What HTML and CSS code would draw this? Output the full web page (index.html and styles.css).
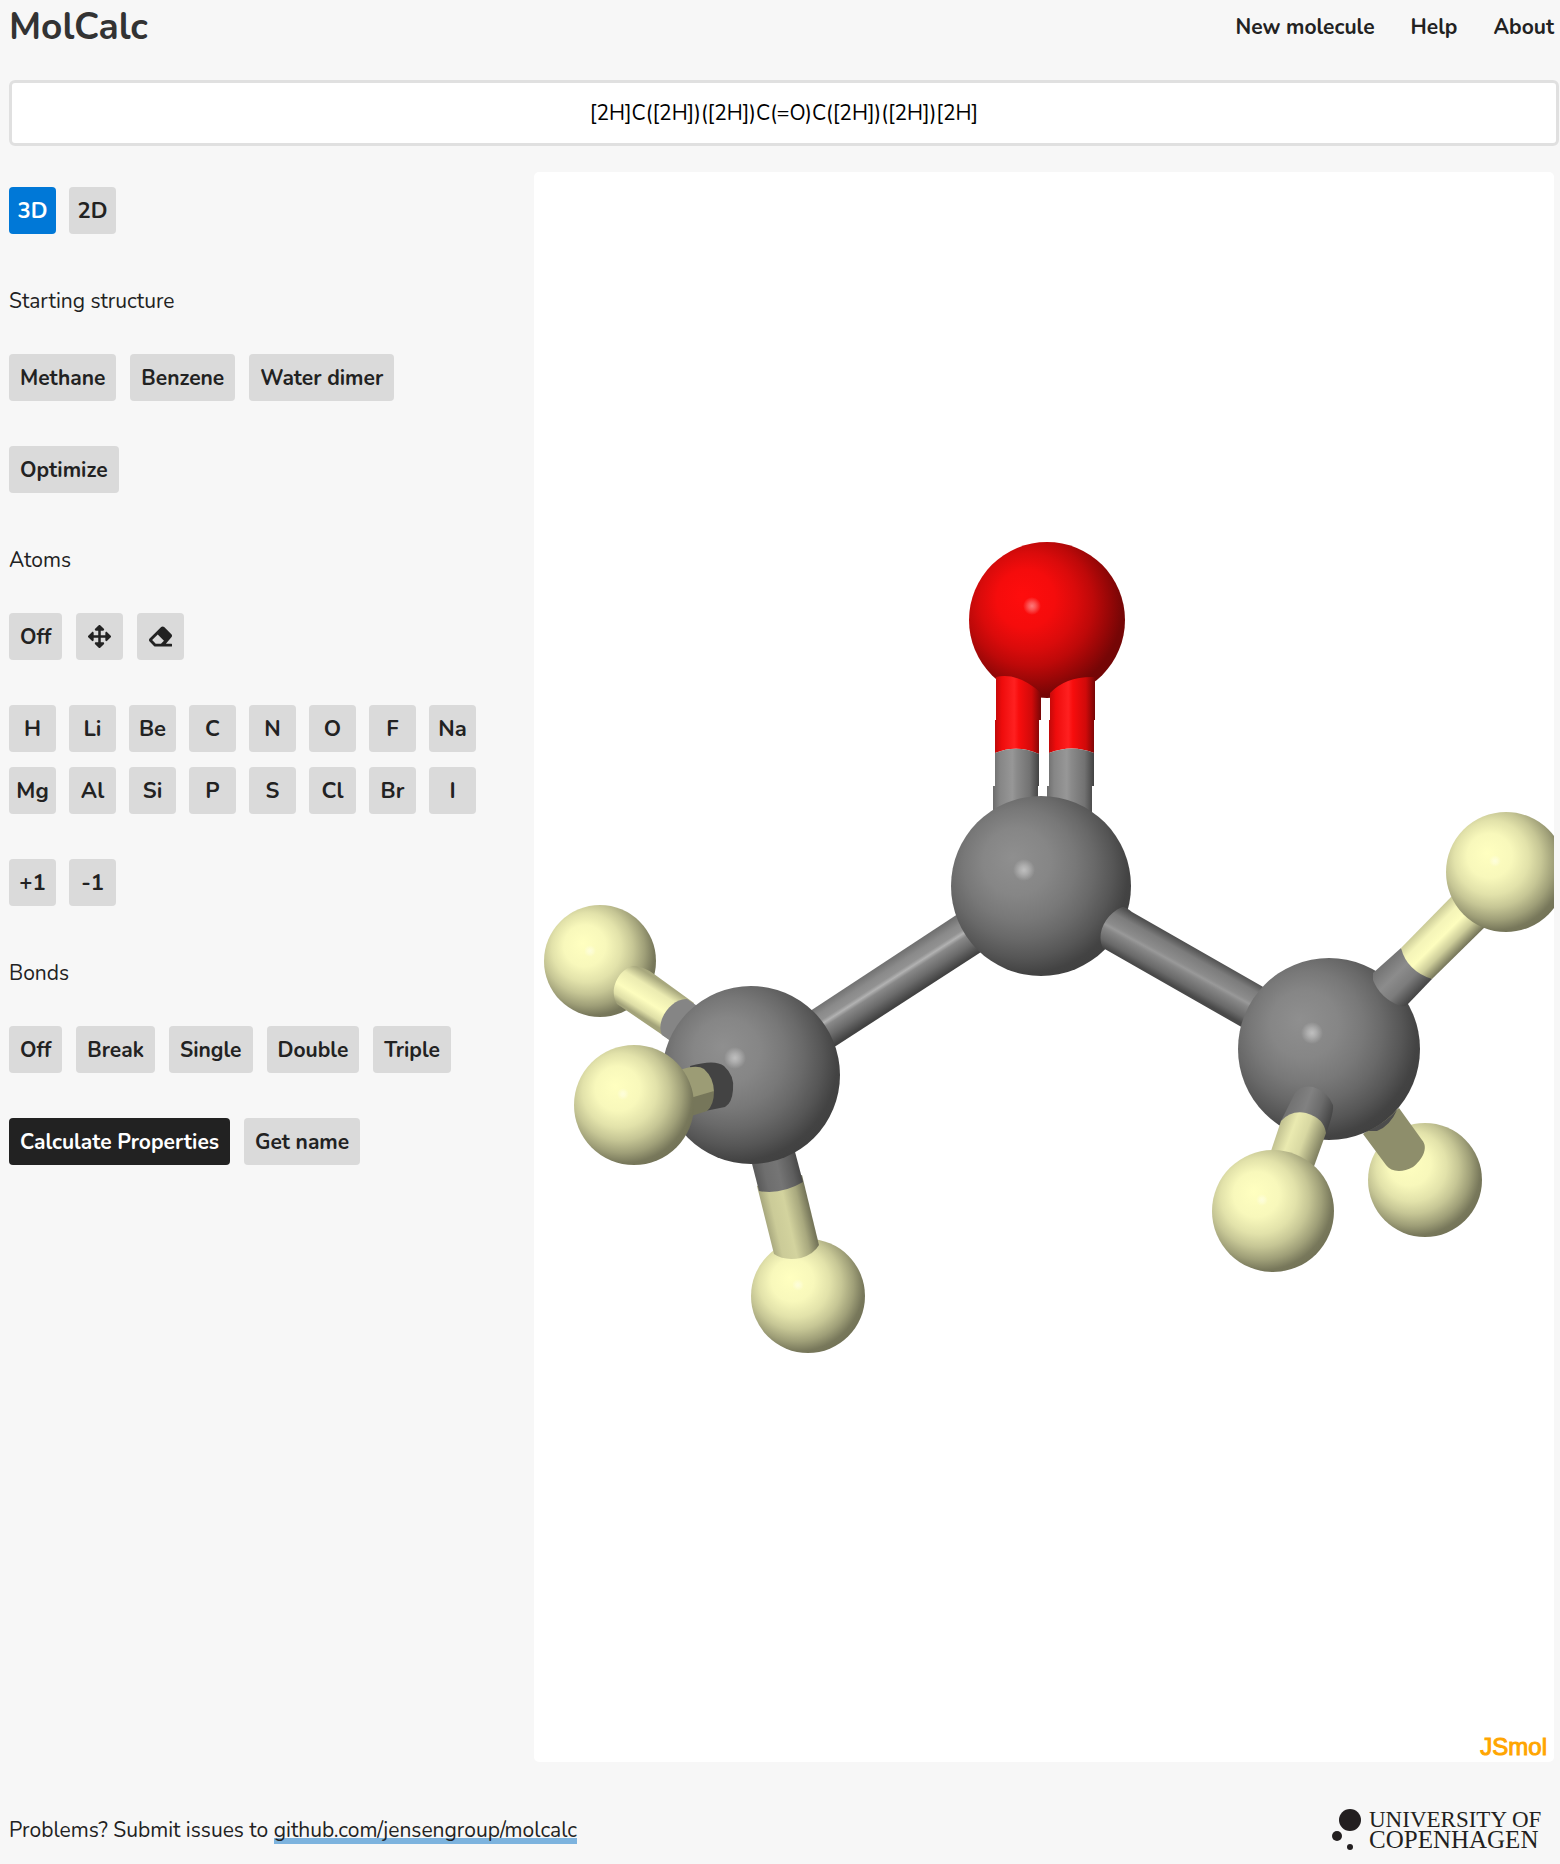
FILE: index.html
```html
<!DOCTYPE html>
<html lang="en">
<head>
<meta charset="utf-8">
<meta name="viewport" content="width=device-width, initial-scale=1">
<title>MolCalc</title>
<link rel="stylesheet" href="styles.css">
</head>
<body>
<header class="header">
  <h1 class="title">MolCalc</h1>
  <nav class="nav">
    <a href="#new">New molecule</a>
    <a href="#help">Help</a>
    <a href="#about">About</a>
  </nav>
</header>

<form class="search">
  <input class="smiles" type="text" aria-label="SMILES" value="[2H]C([2H])([2H])C(=O)C([2H])([2H])[2H]">
</form>

<main class="editor">
  <section class="tools" aria-label="Editor tools">
    <div class="row squares">
      <button class="btn square active" type="button">3D</button>
      <button class="btn square" type="button">2D</button>
    </div>

    <h2 class="label">Starting structure</h2>
    <div class="row">
      <button class="btn" type="button">Methane</button>
      <button class="btn" type="button">Benzene</button>
      <button class="btn" type="button">Water dimer</button>
    </div>
    <div class="row spaced">
      <button class="btn" type="button">Optimize</button>
    </div>

    <h2 class="label">Atoms</h2>
    <div class="row">
      <button class="btn" type="button">Off</button>
      <button class="btn square" type="button" aria-label="Move">
        <svg class="icon" viewBox="0 0 512 512" aria-hidden="true"><path d="M352 426l-80 80a24 24 0 0 1-33 0l-80-80c-15-15-4-40 17-40h52V284H126v52c0 21-25 32-40 17L6 273a24 24 0 0 1 0-34l80-80c15-15 40-4 40 17v52h102V126h-52c-21 0-32-25-17-40l80-80a24 24 0 0 1 33 0l80 80c15 15 5 40-17 40h-51v102h102v-52c0-21 25-32 40-17l80 80a24 24 0 0 1 0 34l-80 80c-15 15-40 4-40-17v-52H284v102h51c22 0 32 25 17 40z"/></svg>
      </button>
      <button class="btn square" type="button" aria-label="Delete">
        <svg class="icon" viewBox="0 0 512 512" aria-hidden="true"><path d="M498 274c19-19 19-49 0-68L338 46c-19-19-49-19-68 0L14 302c-19 19-19 49 0 68l96 96a48 48 0 0 0 34 14h356c7 0 12-5 12-12v-40c0-7-5-12-12-12H376zM195 211l138 138-67 67H150l-80-80z"/></svg>
      </button>
    </div>
    <div class="row squares elements spaced">
      <button class="btn square" type="button">H</button>
      <button class="btn square" type="button">Li</button>
      <button class="btn square" type="button">Be</button>
      <button class="btn square" type="button">C</button>
      <button class="btn square" type="button">N</button>
      <button class="btn square" type="button">O</button>
      <button class="btn square" type="button">F</button>
      <button class="btn square" type="button">Na</button>
      <button class="btn square" type="button">Mg</button>
      <button class="btn square" type="button">Al</button>
      <button class="btn square" type="button">Si</button>
      <button class="btn square" type="button">P</button>
      <button class="btn square" type="button">S</button>
      <button class="btn square" type="button">Cl</button>
      <button class="btn square" type="button">Br</button>
      <button class="btn square" type="button">I</button>
    </div>
    <div class="row squares spaced">
      <button class="btn square" type="button">+1</button>
      <button class="btn square" type="button">-1</button>
    </div>

    <h2 class="label">Bonds</h2>
    <div class="row">
      <button class="btn" type="button">Off</button>
      <button class="btn" type="button">Break</button>
      <button class="btn" type="button">Single</button>
      <button class="btn" type="button">Double</button>
      <button class="btn" type="button">Triple</button>
    </div>
    <div class="row spaced">
      <button class="btn primary" type="button">Calculate Properties</button>
      <button class="btn" type="button">Get name</button>
    </div>
  </section>

  <section class="viewer" aria-label="Molecule viewer">
    <svg class="molecule" viewBox="534 172 1020 1590" role="img" aria-label="Deuterated acetone, ball and stick model">
      <defs>
        <radialGradient id="carbon" cx=".42" cy=".42" r=".62" fx=".34" fy=".34">
          <stop offset="0" stop-color="#8f8f8f"/><stop offset=".3" stop-color="#868686"/><stop offset=".5" stop-color="#787878"/><stop offset=".65" stop-color="#696969"/><stop offset=".8" stop-color="#565656"/><stop offset=".92" stop-color="#434343"/><stop offset="1" stop-color="#404040"/>
        </radialGradient>
        <radialGradient id="oxygen" cx=".42" cy=".42" r=".62" fx=".34" fy=".34">
          <stop offset="0" stop-color="#ff0d0d"/><stop offset=".3" stop-color="#f50c0c"/><stop offset=".5" stop-color="#da0b0b"/><stop offset=".65" stop-color="#be0909"/><stop offset=".8" stop-color="#970707"/><stop offset=".92" stop-color="#760606"/><stop offset="1" stop-color="#720606"/>
        </radialGradient>
        <radialGradient id="deuterium" cx=".42" cy=".42" r=".62" fx=".34" fy=".34">
          <stop offset="0" stop-color="#ffffc0"/><stop offset=".3" stop-color="#f8f8bb"/><stop offset=".5" stop-color="#e2e2aa"/><stop offset=".65" stop-color="#c6c695"/><stop offset=".8" stop-color="#9f9f78"/><stop offset=".92" stop-color="#78785b"/><stop offset="1" stop-color="#727256"/>
        </radialGradient>
        <radialGradient id="shine">
          <stop offset="0" stop-color="#fff" stop-opacity=".45"/><stop offset=".4" stop-color="#fff" stop-opacity=".3"/><stop offset="1" stop-color="#fff" stop-opacity="0"/>
        </radialGradient>
        <linearGradient id="tubeRed">
          <stop offset="0" stop-color="#c00909"/><stop offset=".15" stop-color="#ee0c0c"/><stop offset=".42" stop-color="#ff2020"/><stop offset=".52" stop-color="#f80d0d"/><stop offset=".8" stop-color="#d00a0a"/><stop offset="1" stop-color="#760606"/>
        </linearGradient>
        <linearGradient id="tubeGrey">
          <stop offset="0" stop-color="#6c6c6c"/><stop offset=".15" stop-color="#868686"/><stop offset=".42" stop-color="#979797"/><stop offset=".52" stop-color="#8a8a8a"/><stop offset=".8" stop-color="#727272"/><stop offset="1" stop-color="#424242"/>
        </linearGradient>
        <linearGradient id="tubeLeft" gradientUnits="userSpaceOnUse" x1="883" y1="963" x2="906" y2="999">
          <stop offset="0" stop-color="#707070"/><stop offset=".2" stop-color="#8a8a8a"/><stop offset=".35" stop-color="#929292"/><stop offset=".43" stop-color="#b2b2b2"/><stop offset=".52" stop-color="#888"/><stop offset=".75" stop-color="#6b6b6b"/><stop offset="1" stop-color="#424242"/>
        </linearGradient>
        <linearGradient id="tubeRight" gradientUnits="userSpaceOnUse" x1="1193" y1="947" x2="1172" y2="985">
          <stop offset="0" stop-color="#505050"/><stop offset=".2" stop-color="#7c7c7c"/><stop offset=".45" stop-color="#8c8c8c"/><stop offset=".52" stop-color="#999"/><stop offset=".6" stop-color="#878787"/><stop offset=".85" stop-color="#696969"/><stop offset="1" stop-color="#494949"/>
        </linearGradient>
        <linearGradient id="creamA" gradientUnits="userSpaceOnUse" x1="661" y1="982" x2="640" y2="1016">
          <stop offset="0" stop-color="#a8a87e"/><stop offset=".25" stop-color="#ebebb1"/><stop offset=".6" stop-color="#fdfdbe"/><stop offset=".85" stop-color="#dedea6"/><stop offset="1" stop-color="#a3a37a"/>
        </linearGradient>
        <linearGradient id="creamC" gradientUnits="userSpaceOnUse" x1="766" y1="1222" x2="810" y2="1212">
          <stop offset="0" stop-color="#a8a87e"/><stop offset=".2" stop-color="#cbcb98"/><stop offset=".5" stop-color="#d3d39e"/><stop offset=".8" stop-color="#a8a87e"/><stop offset="1" stop-color="#76765a"/>
        </linearGradient>
        <linearGradient id="greyC" gradientUnits="userSpaceOnUse" x1="757" y1="1178" x2="801" y2="1168">
          <stop offset="0" stop-color="#5c5c5c"/><stop offset=".2" stop-color="#6e6e6e"/><stop offset=".5" stop-color="#757575"/><stop offset=".8" stop-color="#5e5e5e"/><stop offset="1" stop-color="#434343"/>
        </linearGradient>
        <linearGradient id="creamD" gradientUnits="userSpaceOnUse" x1="1425" y1="922" x2="1457" y2="954">
          <stop offset="0" stop-color="#c6c694"/><stop offset=".25" stop-color="#f4f4b8"/><stop offset=".5" stop-color="#fdfdbe"/><stop offset=".75" stop-color="#cdcd9a"/><stop offset="1" stop-color="#76765a"/>
        </linearGradient>
        <linearGradient id="greyD" gradientUnits="userSpaceOnUse" x1="1388" y1="960" x2="1420" y2="992">
          <stop offset="0" stop-color="#747474"/><stop offset=".35" stop-color="#8c8c8c"/><stop offset=".65" stop-color="#7c7c7c"/><stop offset="1" stop-color="#434343"/>
        </linearGradient>
        <linearGradient id="creamE" gradientUnits="userSpaceOnUse" x1="1277" y1="1132" x2="1320" y2="1148">
          <stop offset="0" stop-color="#c0c090"/><stop offset=".3" stop-color="#eaeab0"/><stop offset=".6" stop-color="#d8d8a2"/><stop offset="1" stop-color="#828262"/>
        </linearGradient>
        <linearGradient id="greyE" gradientUnits="userSpaceOnUse" x1="1288" y1="1102" x2="1331" y2="1118">
          <stop offset="0" stop-color="#707070"/><stop offset=".4" stop-color="#818181"/><stop offset=".7" stop-color="#6b6b6b"/><stop offset="1" stop-color="#454545"/>
        </linearGradient>
      </defs>

      <!-- carbonyl oxygen and its double bond -->
      <circle cx="1047" cy="620" r="78" fill="url(#oxygen)"/>
      <circle cx="1032" cy="606" r="9" fill="url(#shine)"/>
      <path fill="url(#tubeRed)" d="M996 677Q1018 672 1041 693V720H1039V754Q1017 744 995 753V720H996z"/>
      <path fill="url(#tubeRed)" d="M1050 693Q1066 676 1095 677V720H1094V753Q1072 744 1049 753V720H1050z"/>
      <path fill="url(#tubeGrey)" d="M995 753Q1017 744 1039 754V786H1038V830H993V786H995z"/>
      <path fill="url(#tubeGrey)" d="M1049 753Q1072 744 1094 753V786H1092V830H1047V786H1049z"/>

      <!-- left methyl group -->
      <circle cx="600" cy="961" r="56" fill="url(#deuterium)"/>
      <circle cx="590" cy="951" r="6" fill="url(#shine)"/>
      <path fill="url(#creamA)" d="M617 1004C608 990 619 969 633 966Q643 966 654 974L694 1003 680 1047z"/>
      <path fill="#858585" d="M662 1035C655 1020 672 998 687 999L712 1016 695 1058z"/>
      <circle cx="808" cy="1296" r="57" fill="url(#deuterium)"/>
      <circle cx="798" cy="1285" r="6" fill="url(#shine)"/>
      <path fill="url(#creamC)" d="M757 1186L802 1175 819 1245Q814 1254 801 1258 784 1261 774 1254z"/>
      <path fill="url(#greyC)" d="M750 1156L794 1148 803 1182Q781 1195 759 1191z"/>
      <path fill="url(#tubeLeft)" d="M798 1019L970 906 995 943 822 1055z"/>
      <circle cx="751" cy="1075" r="89" fill="url(#carbon)"/>
      <circle cx="735" cy="1058" r="11" fill="url(#shine)"/>
      <path fill="#434343" d="M690 1066Q715 1059 724 1066 735 1076 733 1090 732 1103 725 1107L700 1112z"/>
      <path fill="#9c9c75" d="M680 1070Q697 1064 704 1069 714 1078 714 1092L680 1104z"/>
      <path fill="#76765a" d="M680 1101L714 1091Q714 1105 707 1111L685 1118z"/>
      <circle cx="634" cy="1105" r="60" fill="url(#deuterium)"/>
      <circle cx="623" cy="1094" r="6" fill="url(#shine)"/>

      <!-- carbonyl carbon -->
      <circle cx="1041" cy="886" r="90" fill="url(#carbon)"/>
      <circle cx="1024" cy="870" r="11" fill="url(#shine)"/>
      <path fill="url(#tubeRight)" d="M1122 907Q1126 907 1132 912L1265 988 1245 1029 1103 948C1096 935 1104 915 1122 907z"/>

      <!-- right methyl group -->
      <circle cx="1425" cy="1180" r="57" fill="url(#deuterium)"/>
      <path fill="#8e8e6b" d="M1363 1134L1399 1108 1422 1140C1429 1148 1422 1160 1413 1167 1402 1173 1391 1172 1386 1165z"/>
      <circle cx="1329" cy="1049" r="91" fill="url(#carbon)"/>
      <circle cx="1312" cy="1033" r="11" fill="url(#shine)"/>
      <path fill="#4c4c4c" d="M1368 1131Q1386 1122 1397 1110 1390 1126 1377 1131z"/>
      <path fill="url(#greyD)" d="M1373 980V973L1401 948 1432 979 1408 1004Q1405 1007 1400 1006 1380 998 1373 980z"/>
      <path fill="url(#creamD)" d="M1401 948L1455 893 1489 923 1432 979Q1407 971 1401 948z"/>
      <circle cx="1506" cy="872" r="60" fill="url(#deuterium)"/>
      <circle cx="1495" cy="861" r="6" fill="url(#shine)"/>
      <path fill="url(#greyE)" d="M1281 1121L1295 1093Q1301 1085 1313 1087 1327 1091 1333 1105 1334 1112 1326 1134z"/>
      <path fill="url(#creamE)" d="M1281 1121Q1291 1110 1306 1113 1324 1118 1326 1133L1312 1172 1268 1160z"/>
      <circle cx="1273" cy="1211" r="61" fill="url(#deuterium)"/>
      <circle cx="1262" cy="1200" r="6" fill="url(#shine)"/>

      <text class="watermark" x="1547" y="1755" text-anchor="end">JSmol</text>
    </svg>
  </section>
</main>

<footer class="footer">
  <p class="issues">Problems? Submit issues to <a href="https://github.com/jensengroup/molcalc">github.com/jensengroup/molcalc</a></p>
  <svg class="university" viewBox="0 0 222 46" role="img" aria-label="University of Copenhagen">
    <circle cx="18" cy="13" r="11"/><circle cx="5" cy="29" r="5"/><circle cx="18" cy="40" r="3"/>
    <text x="37" y="20" font-size="23">UNIVERSITY OF</text>
    <text x="37" y="41" font-size="25">COPENHAGEN</text>
  </svg>
</footer>
</body>
</html>
```
FILE: styles.css
```css
* {
  box-sizing: border-box;
}

body {
  margin: 0;
  padding: 0 6px 0 9px;
  background: #f7f7f7;
  color: #222;
  font-family: Nunito, Lato, "Open Sans", sans-serif;
  font-size: 21px;
  line-height: 30px;
}

a {
  color: inherit;
  text-decoration: none;
}

.header {
  display: flex;
  align-items: center;
  justify-content: space-between;
  height: 54px;
}

.title {
  margin: 0;
  color: #333;
  font-size: 37px;
  font-weight: 700;
  line-height: 54px;
}

.nav {
  display: flex;
  gap: 36px;
  font-weight: 700;
}

.search {
  margin: 26px -5px 26px 0;
}

.smiles {
  display: block;
  width: 100%;
  height: 66px;
  padding: 0 12px;
  border: 3px solid #e0e0e0;
  border-radius: 6px;
  background: #fff;
  color: #000;
  font: inherit;
  text-align: center;
}

.editor {
  display: grid;
  grid-template-columns: 525fr 1020fr;
}

.tools {
  padding-top: 15px;
}

.row {
  display: flex;
  flex-wrap: wrap;
  gap: 14px;
}

.squares {
  gap: 15px 13px;
}

.spaced {
  margin-top: 45px;
}

.label {
  margin: 52px 0 38px;
  font-size: 21px;
  font-weight: 400;
  line-height: 30px;
}

.btn {
  height: 47px;
  padding: 0 11px;
  border: 0;
  border-radius: 4px;
  background: #dadada;
  color: #222;
  font: inherit;
  font-weight: 700;
}

.square {
  width: 47px;
  padding: 0;
  font-size: 22px;
}

.elements {
  max-width: 480px;
}

.active {
  background: #0078d7;
  color: #fff;
}

.primary {
  background: #222;
  color: #fff;
}

.icon {
  display: block;
  width: 23px;
  height: 23px;
  margin: 0 auto;
  fill: #222;
}

.viewer {
  overflow: hidden;
  border-radius: 5px;
  background: #fff;
}

.molecule {
  display: block;
  width: 100%;
  height: auto;
}

.watermark {
  fill: #ffa500;
  stroke: #ffa500;
  stroke-width: 1px;
  font-family: "Liberation Sans", Arial, sans-serif;
  font-size: 24px;
}

.footer {
  display: flex;
  align-items: center;
  justify-content: space-between;
  padding: 45px 0 11px;
}

.issues {
  margin: 0;
}

.issues a {
  display: inline-block;
  background: linear-gradient(#7db3de, #7db3de) 0 100% / 100% 6px no-repeat;
  line-height: 28px;
}

.university {
  width: 222px;
  height: 46px;
  fill: #231f20;
  font-family: "Liberation Serif", "Times New Roman", serif;
}
```
